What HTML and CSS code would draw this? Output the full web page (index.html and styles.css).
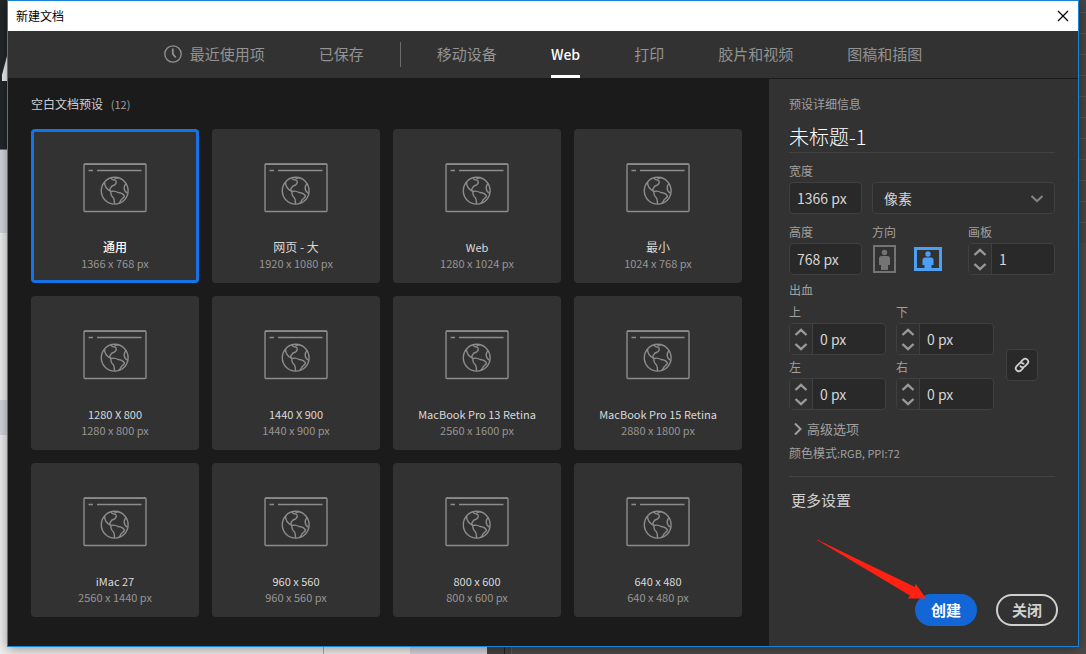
FILE: index.html
```html
<!DOCTYPE html>
<html lang="zh-CN">
<head>
<meta charset="utf-8">
<title>新建文档</title>
<meta name="viewport" content="width=device-width, initial-scale=1">
<link rel="stylesheet" href="styles.css">
</head>
<body>
<svg class="symbols" aria-hidden="true">
  <symbol id="web-doc" viewBox="0 0 64 50">
    <rect x="1" y="1" width="62" height="47.5" rx="1"/>
    <path d="M1 1.300h62M5.500 7.500h4.500M14 7.500h44.500"/>
    <circle cx="31.700" cy="27.700" r="13.400"/>
    <path d="M21.500 19c0 4.500 3 8 6.500 9.500M28.500 14.700c-.5 1.500 1.500 2.500 3.500 2.300 2 1.200 1.500 3.500-.5 5-2 .5-3.500 1.500-4 3-1 1-.8 2.500.5 3.500 3-1 5-.2 7 1 3 .3 5.500 1.500 6.500 3.500-.5 2-2.500 2.500-3.500 4-.5 1.500-1.300 2.500-2.300 3.200M28 28.500c-.5 2.500.3 4.500 2.500 6.500 1.200 2 .8 4 1 6M43.500 20.500c-3.200 2-3.200 7.500.8 9.500M31.500 15.500l4-1"/>
  </symbol>
  <symbol id="up" viewBox="0 0 14 8"><path d="M1.500 7L7 1.800 12.500 7"/></symbol>
  <symbol id="down" viewBox="0 0 14 8"><path d="M1.500 1L7 6.200 12.500 1"/></symbol>
</svg>
<svg class="page-mark" viewBox="0 0 5 25" aria-hidden="true"><path d="M5 0v25H0V19z"/></svg>
<main class="dialog">
  <header class="titlebar">
    <h1 class="window-title">新建文档</h1>
    <button class="close" aria-label="关闭窗口"><svg viewBox="0 0 12 12"><path d="M1 1l10 10M11 1L1 11"/></svg></button>
  </header>
  <nav class="tabs">
    <div class="tab-group">
      <button class="tab"><svg class="clock" viewBox="0 0 18 18"><circle cx="9" cy="9" r="8.200"/><path class="hand" d="M8.800 3.500V9l3 3.500"/></svg>最近使用项</button>
      <button class="tab">已保存</button>
    </div>
    <span class="divider"></span>
    <div class="tab-group">
      <button class="tab">移动设备</button>
      <button class="tab active">Web</button>
      <button class="tab">打印</button>
      <button class="tab">胶片和视频</button>
      <button class="tab">图稿和插图</button>
    </div>
  </nav>
  <div class="content">
    <section class="presets">
      <h2 class="presets-title">空白文档预设 <span class="count">(12)</span></h2>
      <div class="cards">
        <button class="card selected"><svg class="doc"><use href="#web-doc"/></svg><span class="name">通用</span><span class="size">1366 x 768 px</span></button>
        <button class="card"><svg class="doc"><use href="#web-doc"/></svg><span class="name">网页 - 大</span><span class="size">1920 x 1080 px</span></button>
        <button class="card"><svg class="doc"><use href="#web-doc"/></svg><span class="name latin">Web</span><span class="size">1280 x 1024 px</span></button>
        <button class="card"><svg class="doc"><use href="#web-doc"/></svg><span class="name">最小</span><span class="size">1024 x 768 px</span></button>
        <button class="card"><svg class="doc"><use href="#web-doc"/></svg><span class="name latin">1280 X 800</span><span class="size">1280 x 800 px</span></button>
        <button class="card"><svg class="doc"><use href="#web-doc"/></svg><span class="name latin">1440 X 900</span><span class="size">1440 x 900 px</span></button>
        <button class="card"><svg class="doc"><use href="#web-doc"/></svg><span class="name latin">MacBook Pro 13 Retina</span><span class="size">2560 x 1600 px</span></button>
        <button class="card"><svg class="doc"><use href="#web-doc"/></svg><span class="name latin">MacBook Pro 15 Retina</span><span class="size">2880 x 1800 px</span></button>
        <button class="card"><svg class="doc"><use href="#web-doc"/></svg><span class="name latin">iMac 27</span><span class="size">2560 x 1440 px</span></button>
        <button class="card"><svg class="doc"><use href="#web-doc"/></svg><span class="name latin">960 x 560</span><span class="size">960 x 560 px</span></button>
        <button class="card"><svg class="doc"><use href="#web-doc"/></svg><span class="name latin">800 x 600</span><span class="size">800 x 600 px</span></button>
        <button class="card"><svg class="doc"><use href="#web-doc"/></svg><span class="name latin">640 x 480</span><span class="size">640 x 480 px</span></button>
      </div>
    </section>
    <form class="details">
      <label class="details-title" for="doc-name">预设详细信息</label>
      <input class="doc-name" id="doc-name" type="text" value="未标题-1">
      <div class="row">
        <div class="field short">
          <label for="width">宽度</label>
          <input class="box" id="width" type="text" value="1366 px">
        </div>
        <div class="select-wrap">
          <select class="box unit" aria-label="单位"><option>像素</option></select>
          <svg class="caret"><use href="#down"/></svg>
        </div>
      </div>
      <div class="row">
        <div class="field short">
          <label for="height">高度</label>
          <input class="box" id="height" type="text" value="768 px">
        </div>
        <div class="field orientation">
          <span class="caption">方向</span>
          <div class="orient-buttons">
            <button class="orient" type="button" aria-label="纵向"><svg class="portrait" viewBox="0 0 23 28"><path class="frame" d="M1 1h21v26H1z"/><circle cx="11.500" cy="7.500" r="2.700"/><path d="M8.500 11h6q2.500 0 2.500 2.500v6.500h-2v5H8v-5H6v-6.500q0-2.500 2.500-2.500z"/></svg></button>
            <button class="orient on" type="button" aria-label="横向"><svg class="landscape" viewBox="0 0 28 24"><path class="frame" d="M1.500 1.500h25v21h-25z"/><circle cx="14" cy="7" r="2.700"/><path d="M11 10.500h6q2.500 0 2.500 2.500v5h-2v4h-7v-4h-2v-5q0-2.500 2.500-2.500z"/></svg></button>
          </div>
        </div>
        <div class="field artboards">
          <label for="artboards">画板</label>
          <div class="stepper"><span class="steps"><button type="button" aria-label="增加画板"><svg><use href="#up"/></svg></button><button type="button" aria-label="减少画板"><svg><use href="#down"/></svg></button></span><input class="value" id="artboards" type="text" value="1"></div>
        </div>
      </div>
      <fieldset class="bleed">
        <legend>出血</legend>
        <div class="bleed-row">
          <div class="bleed-grid">
            <div class="field">
              <label for="top">上</label>
              <div class="stepper"><span class="steps"><button type="button" aria-label="增加上"><svg><use href="#up"/></svg></button><button type="button" aria-label="减少上"><svg><use href="#down"/></svg></button></span><input class="value" id="top" type="text" value="0 px"></div>
            </div>
            <div class="field">
              <label for="bottom">下</label>
              <div class="stepper"><span class="steps"><button type="button" aria-label="增加下"><svg><use href="#up"/></svg></button><button type="button" aria-label="减少下"><svg><use href="#down"/></svg></button></span><input class="value" id="bottom" type="text" value="0 px"></div>
            </div>
            <div class="field">
              <label for="left">左</label>
              <div class="stepper"><span class="steps"><button type="button" aria-label="增加左"><svg><use href="#up"/></svg></button><button type="button" aria-label="减少左"><svg><use href="#down"/></svg></button></span><input class="value" id="left" type="text" value="0 px"></div>
            </div>
            <div class="field">
              <label for="right">右</label>
              <div class="stepper"><span class="steps"><button type="button" aria-label="增加右"><svg><use href="#up"/></svg></button><button type="button" aria-label="减少右"><svg><use href="#down"/></svg></button></span><input class="value" id="right" type="text" value="0 px"></div>
            </div>
          </div>
          <button class="link" type="button" aria-label="使所有设置相同"><svg viewBox="0 0 16 16"><g transform="rotate(-45 8 8)"><path d="M7 11H3.500a3 3 0 0 1 0-6H7a3 3 0 0 1 2.800 4M9 5h3.500a3 3 0 0 1 0 6H9a3 3 0 0 1-2.800-4"/></g></svg></button>
        </div>
      </fieldset>
      <button class="advanced" type="button"><svg viewBox="0 0 8 14"><path d="M1 1.500L6.500 7 1 12.500"/></svg>高级选项</button>
      <p class="mode">颜色模式<span class="latin">:RGB, PPI:72</span></p>
      <hr class="rule">
      <button class="more" type="button">更多设置</button>
      <div class="actions">
        <button class="pill primary" type="button">创建<svg class="arrow" viewBox="0 0 110 62" aria-hidden="true"><path d="M0 0Q1-1 3 1L98 47 98.500 43.500 109 58.500 91 58.500 93 55.500Z"/></svg></button>
        <button class="pill" type="button">关闭</button>
      </div>
    </form>
  </div>
</main>
</body>
</html>
```

FILE: styles.css
```css
* {
  box-sizing: border-box;
}

body {
  margin: 0;
  min-height: 100vh;
  padding: 0 7px 7px;
  display: flex;
  font: 12px/20px "Noto Sans CJK SC", sans-serif;
  color: #a0a0a0;
  background:
    linear-gradient(#22272a 0 149px, #70777a 149px 150px, #d5d8df 150px 233px, #f0f0f0 233px 400px, #d5d8df 400px 435px, #f0f0f0 435px) 0 0 / 7px 647px no-repeat,
    repeating-linear-gradient(#474644 0 12px, #555452 12px 13px, #474644 13px 21px) 100% 0 / 7px 243px no-repeat,
    linear-gradient(90deg, #f0f0f0 0 323px, #35dfe2 323px 324px, #f0f0f0 324px 410px, #d5d8df 410px 487px, #444 487px 504px, #222 504px 505px, #444 505px 511px, #5a5a5a 511px 512px, #4b4b4b 512px) 0 100% / 100% 7px no-repeat,
    #4b4a48;
}

button, input, select {
  margin: 0;
  padding: 0;
  border: 0;
  background: none;
  color: inherit;
  font: inherit;
}

input, select {
  min-width: 0;
}

svg {
  display: block;
  flex: none;
  fill: none;
  stroke: currentColor;
}

.symbols {
  position: absolute;
  width: 0;
  height: 0;
}

.page-mark {
  position: absolute;
  left: 2px;
  top: 56px;
  width: 5px;
  height: 25px;
  fill: #f4f4f4;
  stroke: none;
}

.dialog {
  flex: 1;
  display: flex;
  flex-direction: column;
  position: relative;
  border: 1px solid #1883d7;
  background: #323232;
  box-shadow: 0 2px 12px rgba(0, 0, 0, 0.4);
}

.titlebar {
  display: flex;
  align-items: center;
  justify-content: space-between;
  height: 30px;
  padding: 0 9px 0 8px;
  background: #fff;
  color: #000;
}

.window-title {
  margin: 0;
  font-size: 12px;
  font-weight: 400;
}

.close svg {
  width: 12px;
  height: 12px;
  stroke-width: 1.2;
}

.tabs {
  display: flex;
  justify-content: center;
  align-items: center;
  height: 48px;
  border-bottom: 1px solid #1b1b1b;
  font-size: 15px;
  color: #939393;
}

.tab-group {
  display: flex;
  align-self: stretch;
  gap: 54px;
}

.tab {
  display: flex;
  align-items: center;
  gap: 8px;
  border-top: 1px solid transparent;
  border-bottom: 3px solid transparent;
  white-space: nowrap;
}

.tab.active {
  color: #fff;
  font-size: 14px;
  font-weight: 500;
  border-bottom-color: #fff;
}

.clock {
  width: 18px;
  height: 18px;
  stroke-width: 1.3;
}

.clock .hand {
  stroke-width: 1.8;
}

.divider {
  width: 1px;
  height: 25px;
  margin: 0 36px;
  background: #6b6b6b;
}

.content {
  flex: 1;
  display: grid;
  grid-template-columns: 1fr 309px;
}

.presets {
  padding: 15px 27px 28px 23px;
  background: #1b1b1b;
}

.presets-title {
  margin: 0 0 15px;
  font-size: 12px;
  font-weight: 400;
  color: #d0d0d0;
}

.count {
  margin-left: 5px;
  font-size: 11px;
  color: #a0a0a0;
}

.cards {
  display: grid;
  grid-template-columns: repeat(4, 1fr);
  gap: 13px;
}

.card {
  display: flex;
  flex-direction: column;
  align-items: center;
  height: 154px;
  padding-top: 31px;
  border: 3px solid #323232;
  border-radius: 4px;
  background: #323232;
  line-height: 16px;
}

.card.selected {
  border-color: #1473e6;
}

.doc {
  width: 64px;
  height: 50px;
  margin-bottom: 26px;
  color: #8c8c8c;
  stroke-width: 1.4;
}

.name {
  color: #dadada;
}

.latin {
  font-size: 11px;
}

.selected .name {
  color: #fff;
  font-weight: 500;
}

.size {
  font-size: 11px;
  color: #969696;
}

.details {
  display: flex;
  flex-direction: column;
  padding: 15px 20px 20px;
}

.doc-name {
  height: 31px;
  margin: 8px 3px 7px 0;
  padding-bottom: 2px;
  border-bottom: 1px solid #424242;
  font-size: 20px;
  font-weight: 300;
  color: #fff;
}

.row {
  display: flex;
  align-items: flex-end;
  margin: 0 3px 7px 0;
}

.field {
  display: flex;
  flex-direction: column;
}

.field label,
.caption,
.bleed legend {
  padding: 0;
  line-height: 22px;
}

.short {
  width: 73px;
  margin-right: 10px;
}

.box,
.stepper {
  width: 100%;
  height: 32px;
  border: 1px solid #404040;
  border-radius: 4px;
  background: #292929;
  color: #d6d6d6;
  font-size: 14px;
}

.box {
  padding: 0 7px;
}

.select-wrap {
  flex: 1;
  position: relative;
}

.unit {
  display: block;
  appearance: none;
  padding: 0 11px;
  background: #2e2e2e;
}

.caret {
  position: absolute;
  right: 11px;
  top: 13px;
  width: 14px;
  height: 8px;
  stroke-width: 2;
  color: #858585;
  pointer-events: none;
}

.orientation {
  flex: 1;
}

.orient-buttons {
  display: flex;
  align-items: center;
  gap: 18px;
  height: 32px;
  padding-left: 1px;
}

.orient {
  color: #747474;
}

.orient svg {
  fill: currentColor;
  stroke: none;
}

.orient .frame {
  fill: none;
  stroke: currentColor;
  stroke-width: 2;
}

.orient.on {
  color: #4b9ff5;
}

.on .frame {
  stroke-width: 3;
}

.portrait {
  width: 23px;
  height: 28px;
}

.landscape {
  width: 28px;
  height: 24px;
}

.artboards {
  width: 87px;
}

.stepper {
  display: flex;
}

.steps {
  flex: none;
  display: flex;
  flex-direction: column;
  justify-content: center;
  align-items: center;
  gap: 7px;
  width: 23px;
  border-right: 1px solid #404040;
  border-radius: 3px 0 0 3px;
  background: #303030;
  color: #999;
}

.steps svg {
  width: 14px;
  height: 8px;
  stroke-width: 2.4;
}

.value {
  flex: 1;
  padding-left: 7px;
}

.bleed {
  margin: -3px 0 0;
  padding: 0;
  border: 0;
}

.bleed-row {
  display: flex;
  align-items: center;
  gap: 12px;
}

.bleed-grid {
  display: grid;
  grid-template-columns: 97px 98px;
  gap: 1px 10px;
}

.link {
  display: grid;
  place-items: center;
  width: 32px;
  height: 32px;
  margin-top: 18px;
  border: 1px solid #404040;
  border-radius: 4px;
  background: #292929;
  color: #d0d0d0;
}

.link svg {
  width: 16px;
  height: 16px;
  stroke-width: 1.8;
}

.advanced {
  display: flex;
  align-items: center;
  gap: 5px;
  margin-top: 9px;
  padding-left: 5px;
  font-size: 13px;
}

.advanced svg {
  width: 8px;
  height: 14px;
  stroke-width: 2;
}

.mode {
  margin: 4px 0 13px;
  font-size: 12px;
}

.rule {
  width: auto;
  height: 1px;
  margin: 0 3px 13px 0;
  border: 0;
  background: #424242;
}

.more {
  align-self: flex-start;
  padding-left: 2px;
  font-size: 15px;
  color: #cfcfcf;
}

.actions {
  display: flex;
  justify-content: flex-end;
  gap: 19px;
  margin-top: auto;
}

.pill {
  position: relative;
  width: 62px;
  height: 32px;
  border: 2px solid #d0d0d0;
  border-radius: 16px;
  font-size: 15px;
  font-weight: 700;
  color: #d0d0d0;
}

.pill.primary {
  border-color: #1266d6;
  background: #1266d6;
  color: #fff;
}

.arrow {
  position: absolute;
  right: 48px;
  bottom: 22px;
  width: 110px;
  height: 62px;
  overflow: visible;
  fill: #ff2213;
  stroke: none;
}
```
